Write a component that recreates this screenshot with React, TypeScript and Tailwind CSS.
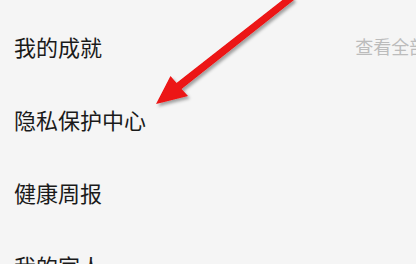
const rows = [
  { label: "我的成就", extra: "查看全部" },
  { label: "隐私保护中心" },
  { label: "健康周报" },
  { label: "我的家人" },
];

function Arrow() {
  return (
    <svg
      className="absolute left-0 top-0 pointer-events-none"
      width="416"
      height="264"
      viewBox="0 0 416 264"
    >
      <defs>
        <filter id="shadow" x="-20%" y="-20%" width="140%" height="140%">
          <feDropShadow dx="2" dy="2.5" stdDeviation="1.6" floodColor="#000" floodOpacity="0.35" />
        </filter>
      </defs>
      <polygon
        points="156,104 170.5,76 176.5,82.9 289.8,-5.7 294.2,-0.3 181.5,89.1 188,96"
        fill="#ec1212"
        filter="url(#shadow)"
      />
    </svg>
  );
}

export default function App() {
  return (
    <div className="relative w-[416px] h-[264px] overflow-hidden bg-[#f5f5f5] font-['Noto_Sans_CJK_SC',sans-serif]">
      <div className="w-[460px] pt-[9px]">
        {rows.map((row) => (
          <div key={row.label} className="flex items-center h-[73px] pl-[14px] pr-[24px]">
            <span className="text-[22px] leading-none text-[#1a1a1a]">{row.label}</span>
            {row.extra && (
              <span className="ml-auto flex items-center gap-1 text-[18px] leading-none text-[#bcbcbc]">
                {row.extra}
                <span className="text-[16px]">›</span>
              </span>
            )}
          </div>
        ))}
      </div>
      <Arrow />
    </div>
  );
}
